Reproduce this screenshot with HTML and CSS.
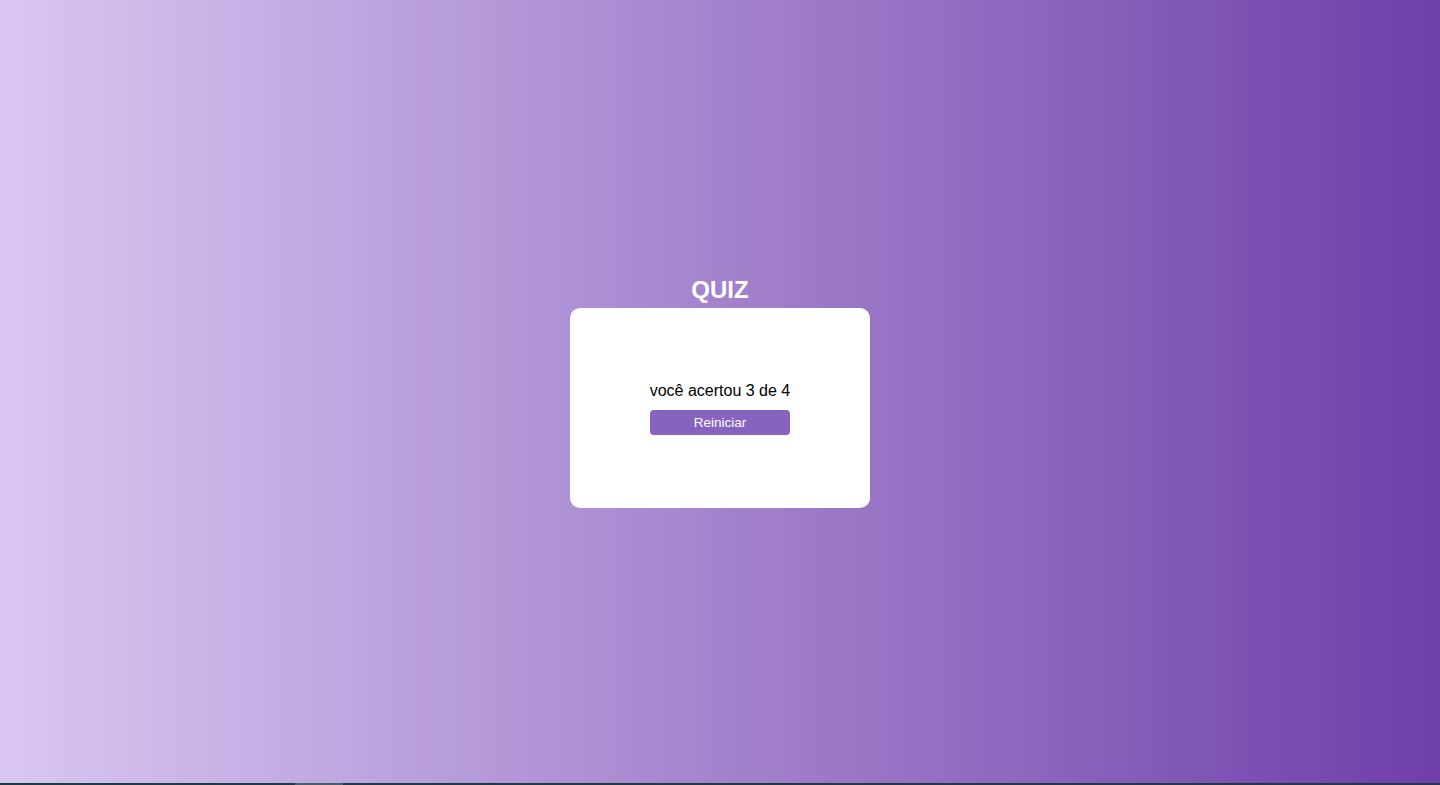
FILE: index.html
```html
<!DOCTYPE html>
<html lang="pt-BR">
<head>
<meta charset="utf-8">
<title>Quiz</title>
<link rel="stylesheet" href="styles.css">
</head>
<body>
<main class="page">
  <h1 class="title">QUIZ</h1>
  <section class="card">
    <p class="result">você acertou 3 de 4</p>
    <button class="restart" type="button">Reiniciar</button>
  </section>
</main>
<div class="bottom-bar"><span class="bottom-thumb"></span></div>
</body>
</html>
```
FILE: styles.css
```css
html, body {
  margin: 0;
  padding: 0;
  height: 100%;
}
body {
  font-family: "Liberation Sans", Arial, sans-serif;
  background: linear-gradient(to right, #d9c7f1 0%, #6e3fa9 100%);
  display: flex;
  flex-direction: column;
}
.page {
  flex: 1;
  display: flex;
  flex-direction: column;
  align-items: center;
  justify-content: center;
}
.title {
  margin: 0 0 4px;
  font-size: 24px;
  line-height: 28px;
  font-weight: bold;
  color: #ffffff;
}
.card {
  box-sizing: border-box;
  width: 300px;
  height: 200px;
  padding-top: 2px;
  background: #ffffff;
  border-radius: 10px;
  display: flex;
  flex-direction: column;
  align-items: center;
  justify-content: center;
}
.result {
  margin: 0 0 10px;
  font-size: 16px;
  line-height: 18px;
  color: #000000;
}
.restart {
  width: 140px;
  height: 25px;
  border: none;
  border-radius: 4px;
  background: #8763c0;
  color: #ffffff;
  font-family: "Liberation Sans", Arial, sans-serif;
  font-size: 13.5px;
  padding: 0;
  cursor: pointer;
}
.bottom-bar {
  height: 2px;
  background: #1f3a44;
  display: flex;
}
.bottom-thumb {
  margin-left: 295px;
  width: 48px;
  background: #4a5f66;
}
```
